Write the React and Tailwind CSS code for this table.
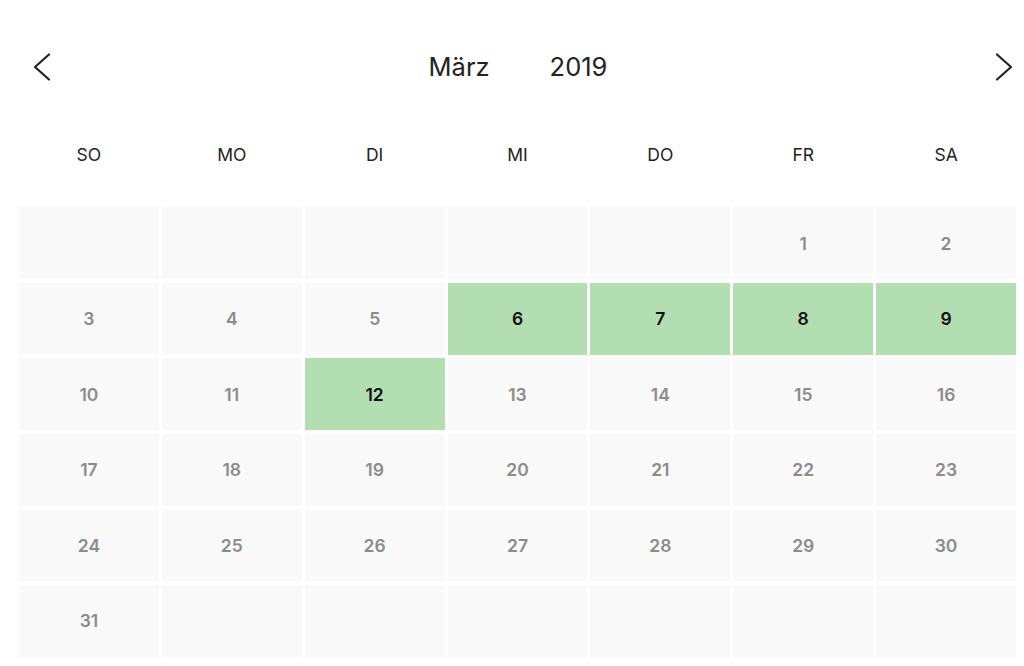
import React from "react";

const days = ["SO", "MO", "DI", "MI", "DO", "FR", "SA"];
const green = new Set([6, 7, 8, 9, 12]);

export default function App() {
  const cells = [];
  for (let i = 0; i < 5; i++) cells.push(null);
  for (let d = 1; d <= 31; d++) cells.push(d);
  while (cells.length < 42) cells.push(null);

  return (
    <div
      className="w-[1024px] h-[666px] bg-white overflow-hidden pl-[19px] pr-[8px]"
      style={{ fontFamily: "Inter, 'Open Sans', sans-serif" }}
    >
      <div className="relative h-[134px] pt-[53px]">
        <div className="flex items-start justify-between">
          <svg width="40" height="28" viewBox="0 0 40 28" className="ml-[11px]">
            <path d="M19 1.5 L5 14 L19 26.5" fill="none" stroke="#222" strokeWidth="2.2" strokeLinecap="round" strokeLinejoin="round" />
          </svg>
          <div className="flex gap-[60px] text-[25.5px] leading-[28px] text-[#222] ml-[-10px]">
            <span>März</span>
            <span>2019</span>
          </div>
          <svg width="40" height="28" viewBox="0 0 40 28">
            <path d="M21 1.5 L35 14 L21 26.5" fill="none" stroke="#222" strokeWidth="2.2" strokeLinecap="round" strokeLinejoin="round" />
          </svg>
        </div>
      </div>
      <div className="grid grid-cols-7 gap-x-[3px] h-[73px]">
        {days.map((d) => (
          <div key={d} className="text-center text-[17.5px] leading-[20px] text-[#222] pt-[11px]">
            {d}
          </div>
        ))}
      </div>
      <div className="grid grid-cols-7 gap-x-[3px] gap-y-[3.5px] auto-rows-[72px]">
        {cells.map((d, i) => {
          const g = d !== null && green.has(d);
          return (
            <div
              key={i}
              className={
                "flex items-center justify-center pt-[2px] text-[17.5px] font-semibold " +
                (g ? "bg-[#b2deb2] text-[#111]" : "bg-[#f9f9f9] text-[#8c8c8c]")
              }
            >
              {d}
            </div>
          );
        })}
      </div>
    </div>
  );
}
